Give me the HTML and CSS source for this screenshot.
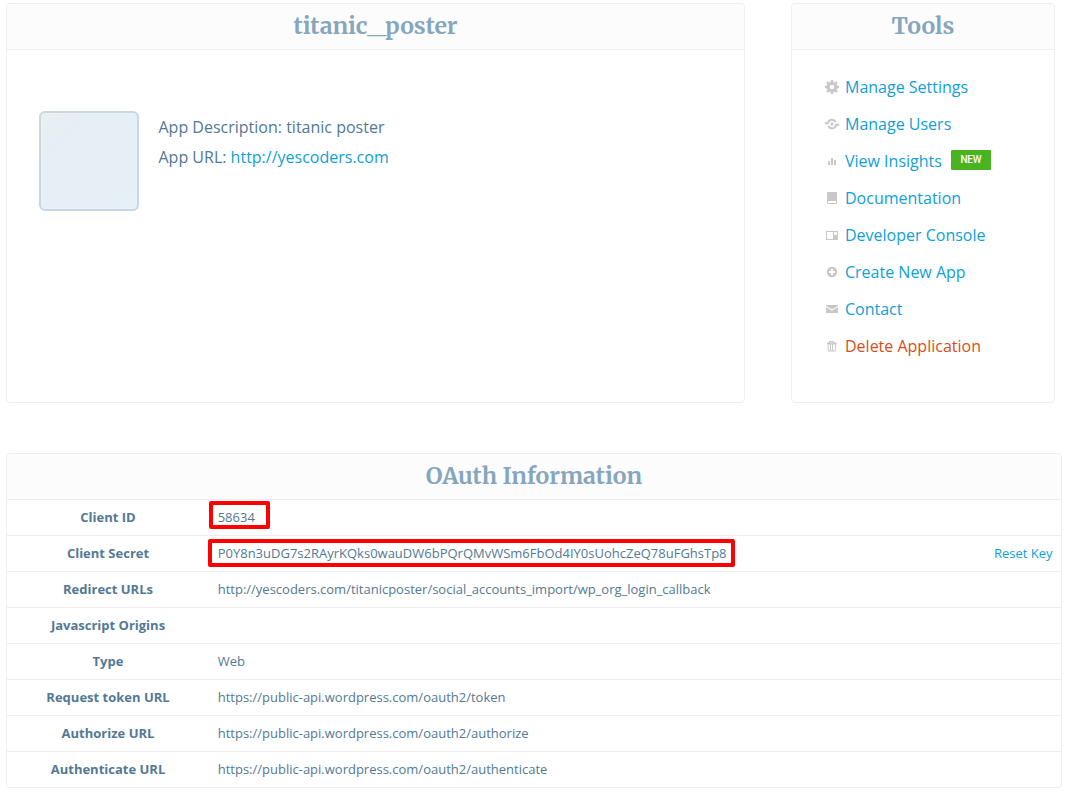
FILE: index.html
```html
<!DOCTYPE html>
<html lang="en">
<head>
<meta charset="utf-8">
<title>titanic_poster</title>
<link rel="stylesheet" href="styles.css">
</head>
<body>
<main class="page">
  <div class="top">
    <section class="card app">
      <h2 class="head">titanic<span class="wide">_</span>poster</h2>
      <div class="app-body">
        <div class="thumb"></div>
        <div class="info">
          <p>App Description: titanic poster</p>
          <p>App URL: <a href="#">http://yescoders.com</a></p>
        </div>
      </div>
    </section>
    <section class="card tools">
      <h2 class="head">Tools</h2>
      <ul class="menu">
        <li><svg class="ico" viewBox="0 0 16 16"><path fill-rule="evenodd" d="M15 9V7l-1.900-.4-.5-1.200 1.100-1.600-1.500-1.500-1.600 1.100-1.200-.5L9 1H7l-.4 1.900-1.200.5-1.600-1.100-1.500 1.500 1.100 1.600-.5 1.200L1 7v2l1.900.4.5 1.200-1.100 1.600 1.500 1.500 1.600-1.100 1.200.5L7 15h2l.4-1.900 1.200-.5 1.600 1.100 1.500-1.500-1.100-1.600.5-1.200zM8 10.200a2.200 2.200 0 1 1 0-4.400 2.200 2.200 0 0 1 0 4.400z"/></svg><a href="#">Manage Settings</a></li>
        <li><svg class="ico" viewBox="0 0 16 16"><path class="line" d="M1 7.200h2.700C4.500 4.900 6 3.800 8 3.800c1.700 0 3 .8 3.800 2.200M15 8.800h-2.700C11.500 11.100 10 12.200 8 12.200c-1.700 0-3-.8-3.800-2.200"/><circle cx="8" cy="8" r="1.700"/></svg><a href="#">Manage Users</a></li>
        <li><svg class="ico" viewBox="0 0 16 16"><path d="M4 8h2v4H4zM7 5h2v7H7zM10 7h2v5h-2z"/></svg><a href="#">View Insights</a><span class="badge">NEW</span></li>
        <li><svg class="ico" viewBox="0 0 16 16"><path d="M4 2h9v9H4.500a.5.5 0 0 0-.5.5v1c0 .3.200.5.5.5H12v-2h1v3H4.500A1.500 1.500 0 0 1 3 12.500V3a1 1 0 0 1 1-1z"/></svg><a href="#">Documentation</a></li>
        <li><svg class="ico" viewBox="0 0 16 16"><path fill-rule="evenodd" d="M2 4h12v9H2zM3 5v7h6V5zM10 5v3h3V5z"/></svg><a href="#">Developer Console</a></li>
        <li><svg class="ico" viewBox="0 0 16 16"><path fill-rule="evenodd" d="M8 2.800a5.200 5.200 0 1 0 0 10.400A5.200 5.200 0 0 0 8 2.800zM7 5h2v2h2v2H9v2H7V9H5V7h2z"/></svg><a href="#">Create New App</a></li>
        <li><svg class="ico" viewBox="0 0 16 16"><path d="M2 4h12v1L8 8.300 2 5zM2 6.300l6 3.200 6-3.200V12H2z"/></svg><a href="#">Contact</a></li>
        <li><svg class="ico" viewBox="0 0 16 16"><path fill-rule="evenodd" d="M5 4.500V3.600C5 3.200 5.300 3 5.600 3h3.800c.3 0 .6.200.6.600v.9h2.500v1.500H12L11.700 13.500H3.800L3.500 6H3V4.500zM6 4v.5h3V4zM4.500 6.500l.2 6H6v-6zM7 6.500v6h1v-6zM9 6.500v6h1.800l.2-6z"/></svg><a class="danger" href="#">Delete Application</a></li>
      </ul>
    </section>
  </div>
  <section class="card oauth">
    <h2 class="head">OAuth Information</h2>
    <dl class="rows">
      <div class="row"><dt>Client ID</dt><dd>58634<i class="mark mark-id"></i></dd></div>
      <div class="row"><dt>Client Secret</dt><dd>P0Y8n3uDG7s2RAyrKQks0wauDW6bPQrQMvWSm6FbOd4IY0sUohcZeQ78uFGhsTp8<i class="mark mark-secret"></i></dd><dd class="reset"><a href="#">Reset Key</a></dd></div>
      <div class="row"><dt>Redirect URLs</dt><dd>http://yescoders.com/titanicposter/social_accounts_import/wp_org_login_callback</dd></div>
      <div class="row"><dt>Javascript Origins</dt><dd></dd></div>
      <div class="row"><dt>Type</dt><dd>Web</dd></div>
      <div class="row"><dt>Request token URL</dt><dd>https://public-api.wordpress.com/oauth2/token</dd></div>
      <div class="row"><dt>Authorize URL</dt><dd>https://public-api.wordpress.com/oauth2/authorize</dd></div>
      <div class="row"><dt>Authenticate URL</dt><dd>https://public-api.wordpress.com/oauth2/authenticate</dd></div>
    </dl>
  </section>
</main>
</body>
</html>
```
FILE: styles.css
```css
* { box-sizing: border-box; }
body {
  margin: 0;
  background: #fff;
  color: #537994;
  font-family: "Open Sans", "Noto Sans", sans-serif;
  font-size: 16px;
}
a { color: #0fa0d8; text-decoration: none; }
.page { padding: 3px 13px 0 6px; }
.top { display: flex; gap: 46px; height: 400px; margin-bottom: 50px; }
.card { border: 1px solid #eee; border-radius: 4px; background: #fff; }
.app { width: 739px; }
.tools { width: 264px; }
.head {
  height: 46px;
  margin: 0;
  border-bottom: 1px solid #eee;
  border-radius: 3px 3px 0 0;
  background: #fcfcfc;
  color: #86a6bd;
  font: bold 23px/44px Merriweather, "DejaVu Serif Condensed", "DejaVu Serif", serif;
  text-align: center;
  white-space: nowrap;
}
.wide { display: inline-block; margin: 0 3px; transform: scaleX(1.65); }
.app-body { display: flex; padding: 61px 32px 0; }
.thumb {
  width: 100px;
  height: 100px;
  border: 2px solid #c8d7e1;
  border-radius: 6px;
  background: linear-gradient(135deg, #e8f0f1, #e6eef6 30%, #e6eef6 75%, #e6f1f7);
  box-shadow: inset 0 0 0 1px #e9f2f8;
}
.info { padding: 1px 0 0 19.500px; }
.info p { margin: 0; line-height: 30px; }
.menu { margin: 0; padding: 18px 0 0 32px; list-style: none; }
.menu li { display: flex; align-items: center; height: 37px; }
.ico { width: 16px; height: 16px; margin: 1px 5px 0 0; fill: #c8c8c8; }
.ico .line { fill: none; stroke: #c8c8c8; stroke-width: 2; }
.badge {
  width: 40px;
  height: 20px;
  margin: -2px 0 0 9px;
  background: #4ab321;
  border-radius: 1px;
  color: #fff;
  font: 500 10px/20px Roboto, "Open Sans", sans-serif;
  letter-spacing: -.3px;
  text-align: center;
}
.menu .danger { color: #d54e21; }
.oauth { width: 1056px; }
.rows { margin: 0; font-size: 13px; }
.row { display: flex; height: 36px; line-height: 35px; border-bottom: 1px solid #eee; }
.row:last-child { border-bottom: 0; height: 35px; }
.row dt { width: 202px; font-weight: bold; text-align: center; }
.row dd { position: relative; flex: 1; margin: 0; padding-left: 8.700px; }
.row .reset { flex: none; padding: 0 8.500px 0 0; }
.mark { position: absolute; border: 4px solid #f00; border-radius: 2px; }
.mark-id { left: 0; top: 1px; width: 61px; height: 28px; }
.mark-secret { left: -1px; top: 3px; width: 527px; height: 28px; }
```
